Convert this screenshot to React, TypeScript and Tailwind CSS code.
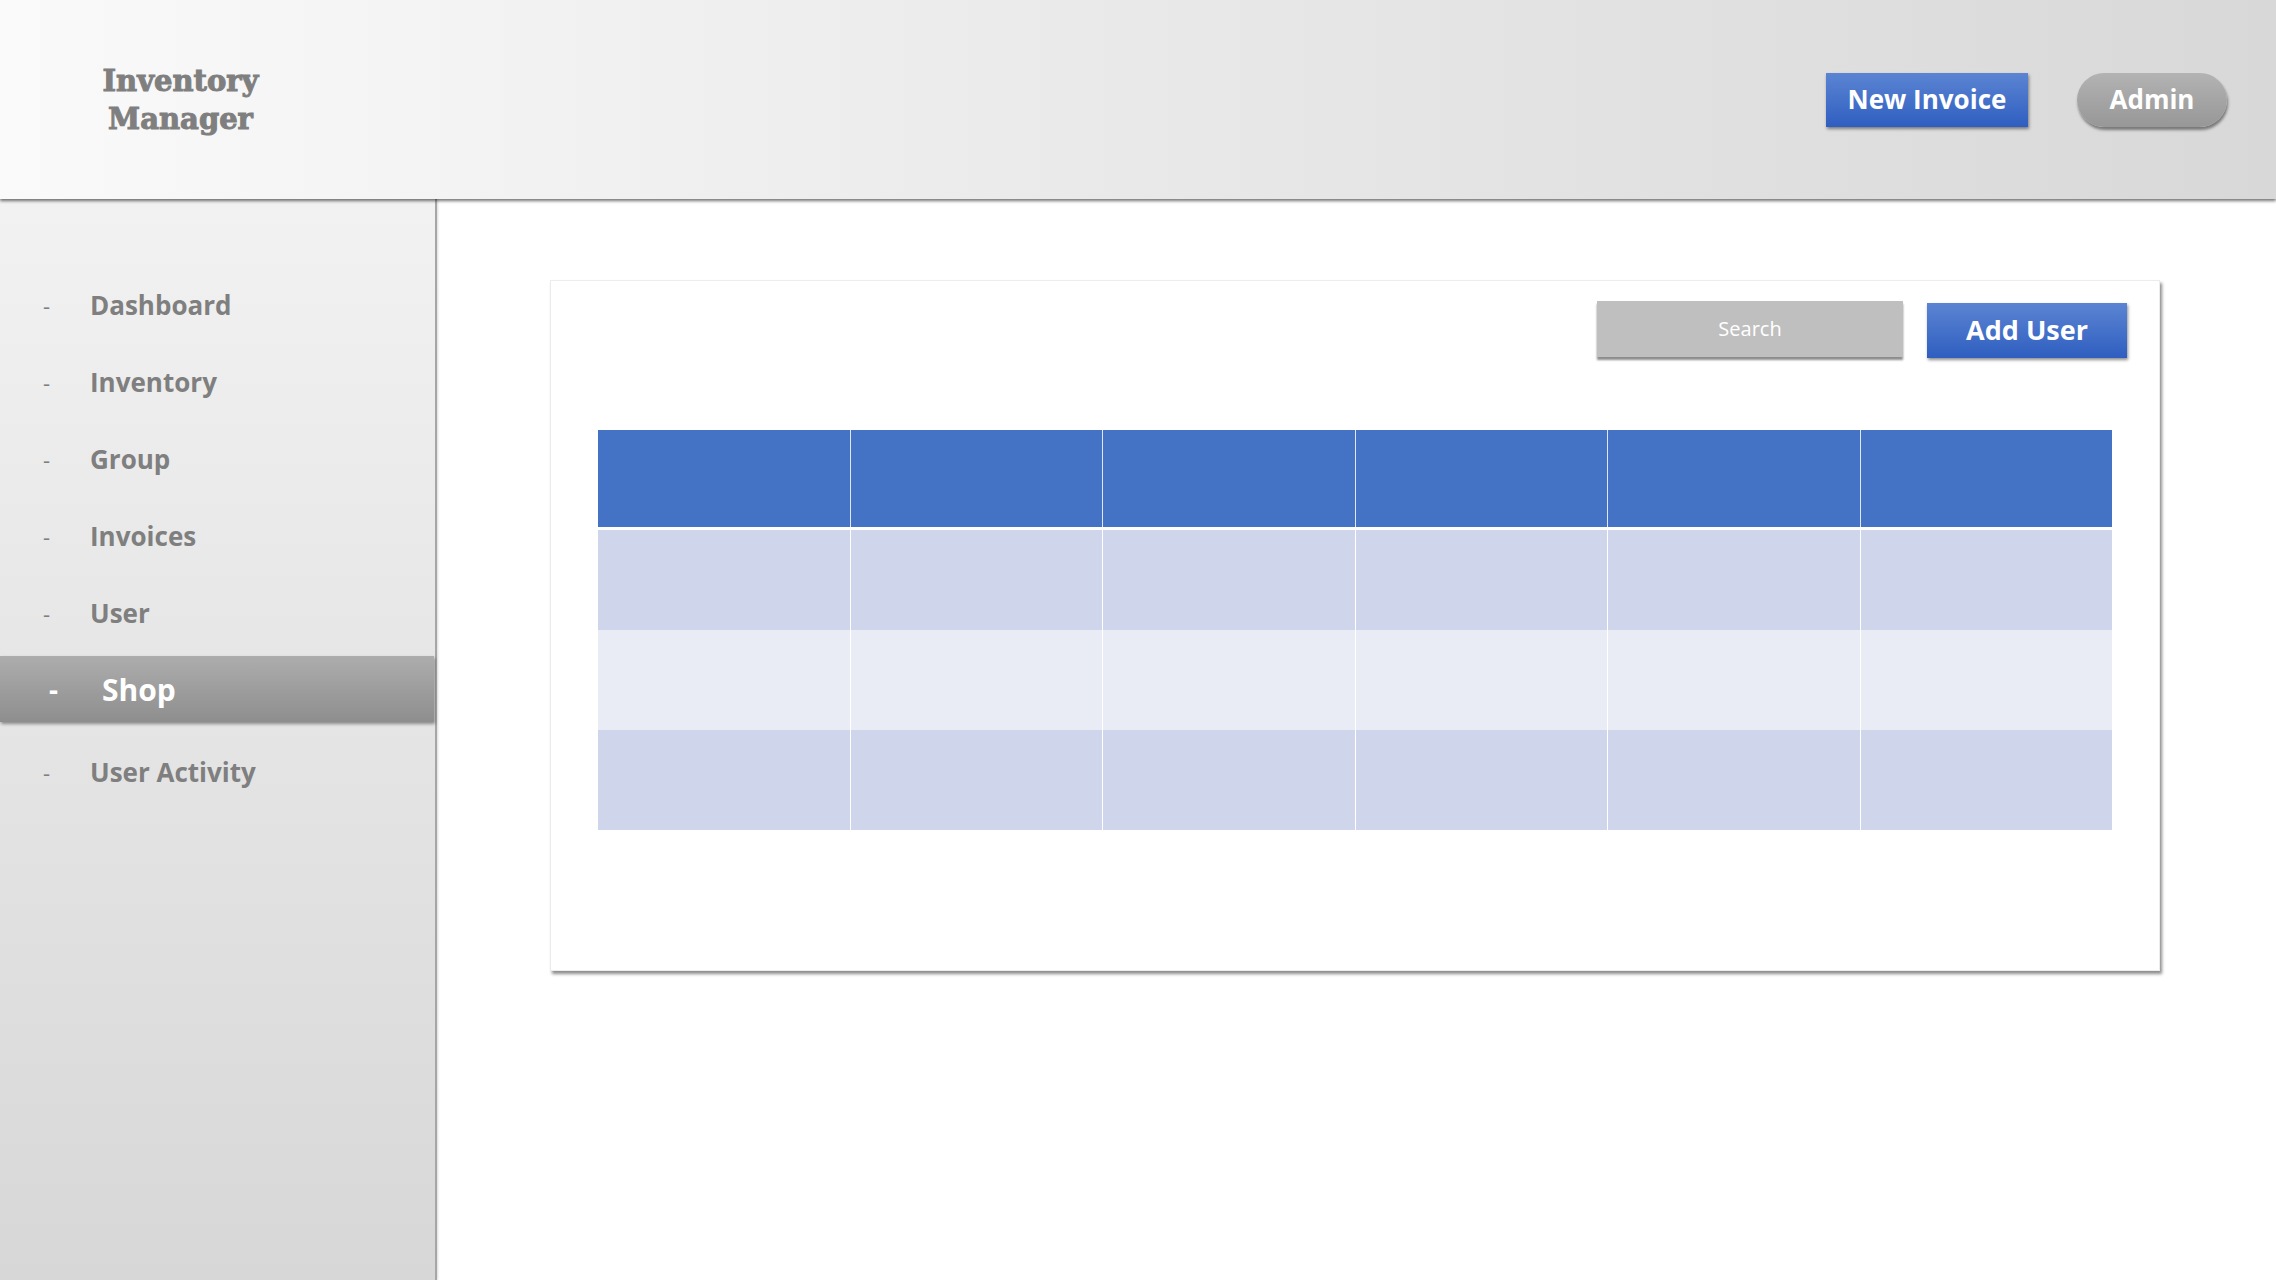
import React from "react";

const navItems = ["Dashboard", "Inventory", "Group", "Invoices", "User"];

const rowColors = ["bg-[#cfd5ea]", "bg-[#e9ebf5]", "bg-[#cfd5ea]"];

function Header() {
  return (
    <header className="relative z-20 flex h-[199px] shrink-0 items-center justify-between bg-gradient-to-r from-[#fafafa] to-[#d8d8d8] pl-[98px] pr-[49px] shadow-[0_2px_3px_rgba(0,0,0,0.55)]">
      <h1 className="w-[165px] text-center font-['DejaVu_Serif',serif] text-[29px] font-bold leading-[38px] text-[#7f7f7f] [-webkit-text-stroke:1px_#7f7f7f]">
        Inventory Manager
      </h1>
      <div className="flex items-center gap-[49px]">
        <button className="flex h-[54px] w-[202px] items-center justify-center bg-gradient-to-b from-[#5b84d2] to-[#2f5ec0] font-['Open_Sans',sans-serif] text-[26px] font-bold text-white shadow-[1px_2px_3px_rgba(0,0,0,0.45)]">
          New Invoice
        </button>
        <button className="flex h-[54px] w-[150px] items-center justify-center rounded-full bg-gradient-to-b from-[#b3b3b3] to-[#979797] font-['Open_Sans',sans-serif] text-[26px] font-bold text-white shadow-[1px_3px_3px_rgba(0,0,0,0.45)]">
          Admin
        </button>
      </div>
    </header>
  );
}

function Sidebar() {
  return (
    <aside className="relative z-10 flex w-[437px] shrink-0 flex-col border-r-2 border-[#a6a6a6] bg-gradient-to-b from-[#f2f2f2] to-[#d7d7d7] pt-[68px] font-['Open_Sans',sans-serif] shadow-[1px_0_2px_rgba(0,0,0,0.15)]">
      {navItems.map((item) => (
        <div key={item} className="flex h-[77px] items-center text-[#7f7f7f]">
          <span className="w-[50px] text-right text-[22px]">-</span>
          <span className="ml-[40px] text-[26px] font-bold">{item}</span>
        </div>
      ))}
      <div className="mt-[4px] flex h-[66px] w-[434px] items-center bg-gradient-to-b from-[#adadad] to-[#8e8e8e] text-white shadow-[1px_2px_3px_rgba(0,0,0,0.4)]">
        <span className="w-[58px] text-right text-[28px] font-bold">-</span>
        <span className="ml-[44px] text-[30px] font-bold">Shop</span>
      </div>
      <div className="mt-[12px] flex h-[76px] items-center text-[#7f7f7f]">
        <span className="w-[50px] text-right text-[22px]">-</span>
        <span className="ml-[40px] text-[26px] font-bold">User Activity</span>
      </div>
    </aside>
  );
}

function DataTable() {
  return (
    <div className="flex flex-col gap-[3px]">
      <div className="grid h-[97px] grid-cols-6 gap-px bg-[#dfe6f4]">
        {Array.from({ length: 6 }).map((_, i) => (
          <div key={i} className="bg-[#4472c4]" />
        ))}
      </div>
      <div className="flex flex-col">
        {rowColors.map((color, r) => (
          <div key={r} className="grid h-[100px] grid-cols-6 gap-px bg-white">
            {Array.from({ length: 6 }).map((_, i) => (
              <div key={i} className={color} />
            ))}
          </div>
        ))}
      </div>
    </div>
  );
}

export default function App() {
  return (
    <div className="flex h-[1280px] w-[2276px] flex-col overflow-hidden bg-white">
      <Header />
      <div className="flex flex-1">
        <Sidebar />
        <main className="flex-1 bg-white pl-[113px] pt-[81px]">
          <div className="flex h-[691px] w-[1610px] flex-col border border-[#ececec] bg-white shadow-[2px_3px_3px_rgba(0,0,0,0.45)]">
            <div className="flex justify-end gap-[24px] pr-[32px] pt-[20px]">
              <div className="flex h-[56px] w-[306px] items-center justify-center bg-[#bfbfbf] font-['Open_Sans',sans-serif] text-[20px] text-white shadow-[0_3px_2px_rgba(0,0,0,0.45)]">
                Search
              </div>
              <button className="mt-[2px] flex h-[55px] w-[200px] items-center justify-center bg-gradient-to-b from-[#5b84d2] to-[#2f5ec0] font-['Open_Sans',sans-serif] text-[27px] font-bold text-white shadow-[1px_2px_3px_rgba(0,0,0,0.45)]">
                Add User
              </button>
            </div>
            <div className="px-[47px] pt-[72px]">
              <DataTable />
            </div>
          </div>
        </main>
      </div>
    </div>
  );
}
